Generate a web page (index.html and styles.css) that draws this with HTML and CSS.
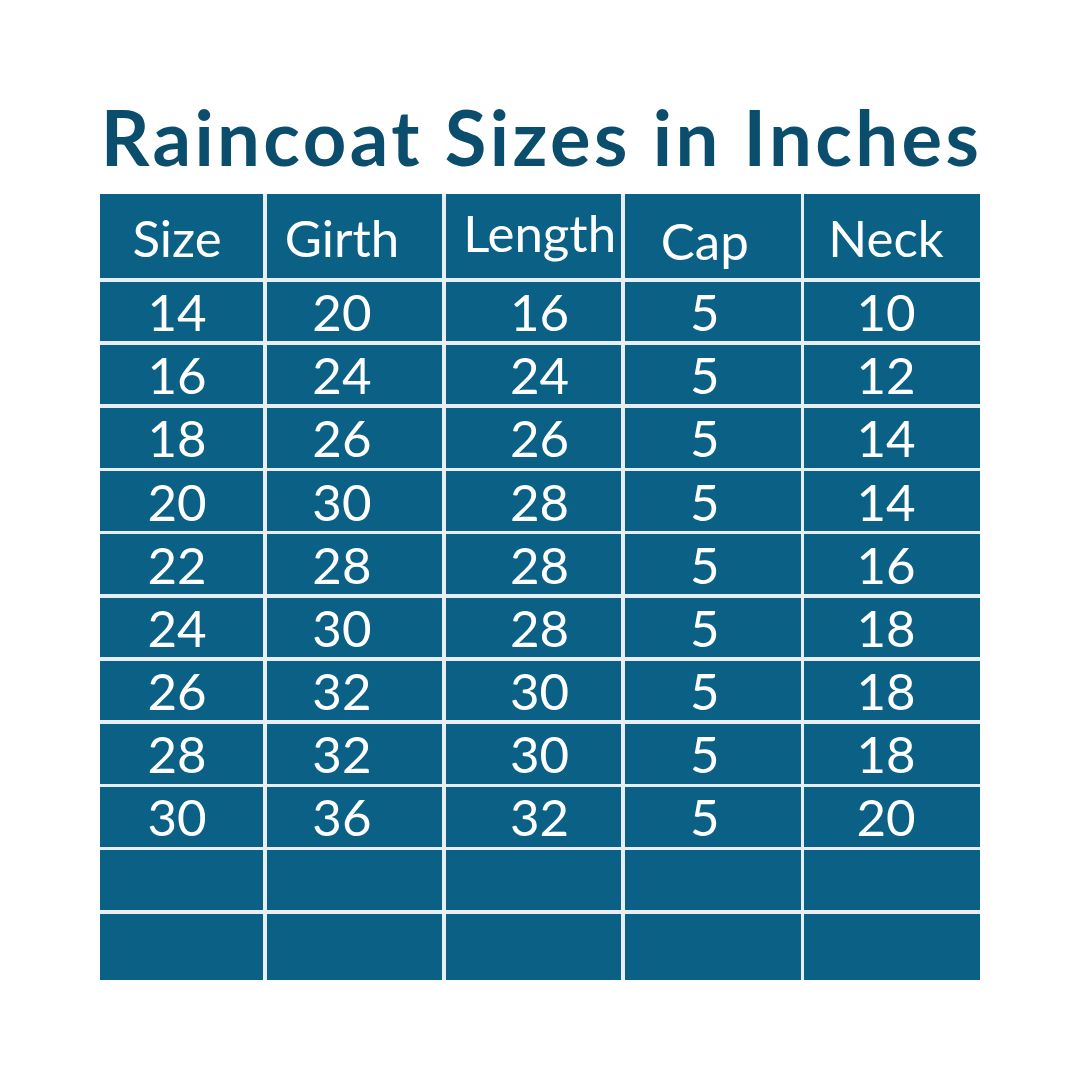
FILE: index.html
```html
<!DOCTYPE html>
<html>
<head>
<meta charset="utf-8">
<link rel="stylesheet" href="styles.css">
</head>
<body>
<div class="page">
  <h1 class="title">Raincoat Sizes in Inches</h1>
  <div class="table">
    <div class="cell head c1">Size</div>
    <div class="cell head c2">Girth</div>
    <div class="cell head c3 up">Length</div>
    <div class="cell head c4 down">Cap</div>
    <div class="cell head c5">Neck</div>

    <div class="cell c1">14</div><div class="cell c2">20</div><div class="cell c3">16</div><div class="cell c4">5</div><div class="cell c5">10</div>
    <div class="cell c1">16</div><div class="cell c2">24</div><div class="cell c3">24</div><div class="cell c4">5</div><div class="cell c5">12</div>
    <div class="cell c1">18</div><div class="cell c2">26</div><div class="cell c3">26</div><div class="cell c4">5</div><div class="cell c5">14</div>
    <div class="cell c1">20</div><div class="cell c2">30</div><div class="cell c3">28</div><div class="cell c4">5</div><div class="cell c5">14</div>
    <div class="cell c1">22</div><div class="cell c2">28</div><div class="cell c3">28</div><div class="cell c4">5</div><div class="cell c5">16</div>
    <div class="cell c1">24</div><div class="cell c2">30</div><div class="cell c3">28</div><div class="cell c4">5</div><div class="cell c5">18</div>
    <div class="cell c1">26</div><div class="cell c2">32</div><div class="cell c3">30</div><div class="cell c4">5</div><div class="cell c5">18</div>
    <div class="cell c1">28</div><div class="cell c2">32</div><div class="cell c3">30</div><div class="cell c4">5</div><div class="cell c5">18</div>
    <div class="cell c1">30</div><div class="cell c2">36</div><div class="cell c3">32</div><div class="cell c4">5</div><div class="cell c5">20</div>
    <div class="cell c1"></div><div class="cell c2"></div><div class="cell c3"></div><div class="cell c4"></div><div class="cell c5"></div>
    <div class="cell c1"></div><div class="cell c2"></div><div class="cell c3"></div><div class="cell c4"></div><div class="cell c5"></div>
  </div>
</div>
</body>
</html>
```

FILE: styles.css
```css
* { box-sizing: border-box; }
html, body {
  margin: 0;
  padding: 0;
  background: #ffffff;
}
body {
  width: 1080px;
  height: 1080px;
  font-family: Lato, "Open Sans", "Liberation Sans", sans-serif;
}
.page {
  display: flex;
  flex-direction: column;
  align-items: center;
  padding-top: 92px;
}
.title {
  margin: 0;
  padding-left: 3px;
  font-size: 76px;
  line-height: 90px;
  font-weight: 700;
  color: #0b4d6d;
  text-align: center;
  letter-spacing: 3.4px;
}
.table {
  margin-top: 12px;
  width: 880px;
  display: grid;
  grid-template-columns: 163px 175.5px 175.5px 175.5px 175.5px;
  grid-template-rows: 84px repeat(10, 59.5px) 66px;
  gap: 3.7px;
  background: #e8eef2;
}
.cell {
  background: #0a6085;
  color: #ffffff;
  display: flex;
  align-items: center;
  justify-content: center;
  font-size: 51px;
  line-height: 1;
}
.c1 { padding-right: 9px; }
.c2 { padding-right: 25px; }
.c3 { padding-left: 12px; }
.c4 { padding-right: 16px; }
.c5 { padding-right: 12px; }
.head { padding-top: 2px; }
.head.up { padding-top: 0; padding-bottom: 8px; }
.head.down { padding-top: 8px; }
```
